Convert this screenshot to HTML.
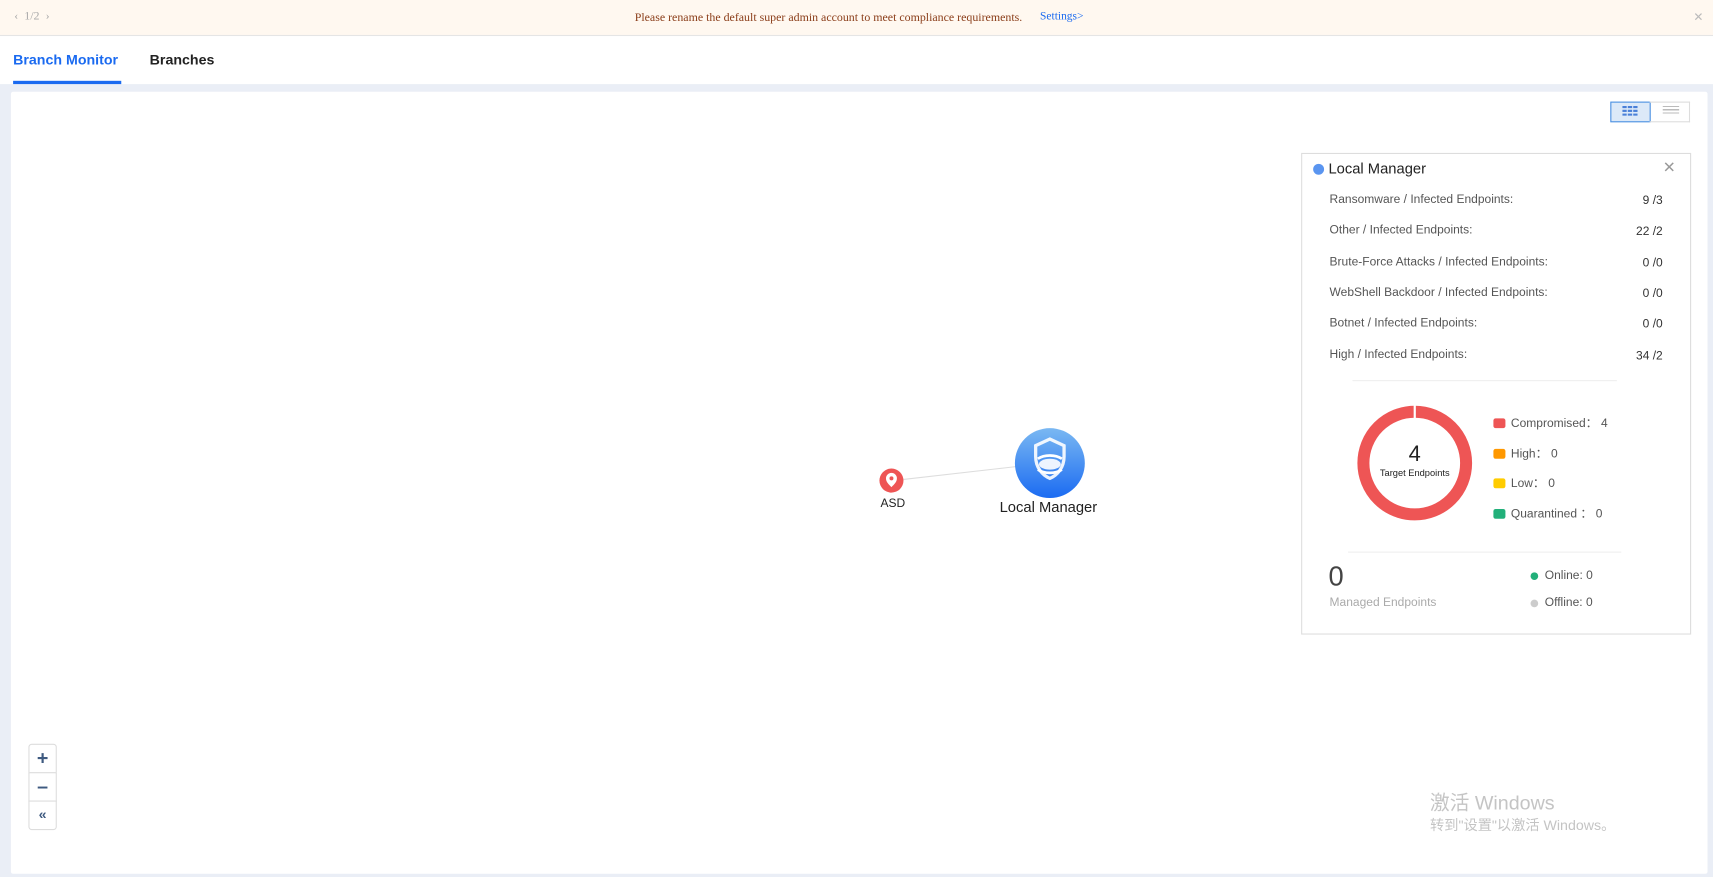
<!DOCTYPE html>
<html><head><meta charset="utf-8"><style>
html,body{margin:0;padding:0;width:1713px;height:877px;overflow:hidden;background:#eaeef6;font-family:"Liberation Sans","Noto Sans CJK SC",sans-serif}
#w{position:absolute;left:0;top:0;width:1568px;height:803px;transform:scale(1.09247,1.0922);transform-origin:0 0;background:#eaeef6}
.a{position:absolute;white-space:nowrap}
.lbl{position:absolute;left:1217px;font-size:11px;color:#555}
.val{position:absolute;right:46px;font-size:11px;color:#333;text-align:right}
.lg{position:absolute;left:1367px;font-size:11px;color:#555}
.lg i{display:inline-block;width:11px;height:9px;border-radius:2px;margin-right:5px;vertical-align:-1px}
.zb{position:absolute;left:26px;width:24px;height:25px;border:1px solid #ddd;background:#fff;color:#3e5a80;text-align:center;font-size:18px;line-height:24px;font-weight:bold}
</style></head><body><div id="w">
<div class="a" style="left:0;top:0;width:1568px;height:32px;background:#fff8f0;border-bottom:1px solid #e5e5e5"></div>
<div class="a" style="left:13px;top:9px;font-size:11px;color:#aaa;font-family:'Liberation Serif',serif">‹ &nbsp;1/2 &nbsp;›</div>
<div class="a" style="left:581px;top:10px;font-size:10.9px;color:#8b3e1a;font-family:'Liberation Serif',serif">Please rename the default super admin account to meet compliance requirements.</div>
<div class="a" style="left:952px;top:10px;font-size:10.5px;color:#1a6af0;font-family:'Liberation Serif',serif">Settings&gt;</div>
<div class="a" style="left:1550px;top:9px;font-size:11px;color:#bbb">✕</div>
<div class="a" style="left:0;top:33px;width:1568px;height:44px;background:#fff"></div>
<div class="a" style="left:12px;top:47px;font-size:13px;font-weight:bold;color:#1a6af0">Branch Monitor</div>
<div class="a" style="left:12px;top:74px;width:99px;height:3px;background:#1a6af0"></div>
<div class="a" style="left:137px;top:47px;font-size:13px;font-weight:bold;color:#222">Branches</div>
<div class="a" style="left:10px;top:84px;width:1553px;height:716px;background:#fff;border-radius:2px"></div>
<div class="a" style="left:1474px;top:93px;width:35px;height:17px;background:#dce9f8;border:1px solid #4a90e2"></div>
<svg class="a" style="left:1485px;top:97px" width="14" height="9"><g fill="#4a80d8"><rect x="0" y="0" width="4" height="2"/><rect x="5" y="0" width="4" height="2"/><rect x="10" y="0" width="4" height="2"/><rect x="0" y="3.5" width="4" height="2"/><rect x="5" y="3.5" width="4" height="2"/><rect x="10" y="3.5" width="4" height="2"/><rect x="0" y="7" width="4" height="2"/><rect x="5" y="7" width="4" height="2"/><rect x="10" y="7" width="4" height="2"/></g></svg>
<div class="a" style="left:1510px;top:93px;width:36px;height:17px;border:1px solid #ddd;border-left:none"></div>
<div class="a" style="left:1522px;top:97px;width:15px;height:9px;background:repeating-linear-gradient(#bbb 0 1px,transparent 1px 3px)"></div>
<div class="a" style="left:1191px;top:140px;width:355px;height:439px;border:1px solid #ddd;background:#fff"></div>
<div class="a" style="left:1202px;top:150px;width:10px;height:10px;border-radius:50%;background:#5a95f0"></div>
<div class="a" style="left:1216px;top:147px;font-size:13.5px;color:#222">Local Manager</div>
<div class="a" style="left:1522px;top:145px;font-size:14px;color:#999">✕</div>
<div class="lbl" style="top:177px">Ransomware / Infected Endpoints:</div><div class="val" style="top:178px">9 /3</div>
<div class="lbl" style="top:205px">Other / Infected Endpoints:</div><div class="val" style="top:206px">22 /2</div>
<div class="lbl" style="top:234px">Brute-Force Attacks / Infected Endpoints:</div><div class="val" style="top:235px">0 /0</div>
<div class="lbl" style="top:262px">WebShell Backdoor / Infected Endpoints:</div><div class="val" style="top:263px">0 /0</div>
<div class="lbl" style="top:290px">Botnet / Infected Endpoints:</div><div class="val" style="top:291px">0 /0</div>
<div class="lbl" style="top:319px">High / Infected Endpoints:</div><div class="val" style="top:320px">34 /2</div>
<div class="a" style="left:1238px;top:348px;width:242px;height:1px;background:#eee"></div>
<svg class="a" style="left:1238px;top:367px" width="114" height="114"><circle cx="57" cy="57" r="47" fill="none" stroke="#ee5555" stroke-width="11"/><rect x="56" y="2" width="2" height="14" fill="#fff"/></svg>
<div class="a" style="left:1238px;top:405px;width:114px;text-align:center;font-size:20px;color:#222;line-height:22px">4</div>
<div class="a" style="left:1238px;top:428px;width:114px;text-align:center;font-size:8.5px;color:#222">Target Endpoints</div>
<div class="lg" style="top:379px"><i style="background:#ee5555"></i>Compromised： 4</div>
<div class="lg" style="top:407px"><i style="background:#ff9800"></i>High： 0</div>
<div class="lg" style="top:434px"><i style="background:#ffcc00"></i>Low： 0</div>
<div class="lg" style="top:462px"><i style="background:#22b07a"></i>Quarantined ： 0</div>
<div class="a" style="left:1234px;top:505px;width:250px;height:1px;background:#eee"></div>
<div class="a" style="left:1216px;top:514px;font-size:25px;color:#444">0</div>
<div class="a" style="left:1217px;top:546px;font-size:11px;color:#aaa">Managed Endpoints</div>
<div class="a" style="left:1401px;top:524px;width:7px;height:7px;border-radius:50%;background:#22b07a"></div>
<div class="a" style="left:1414px;top:521px;font-size:11px;color:#555">Online: 0</div>
<div class="a" style="left:1401px;top:549px;width:7px;height:7px;border-radius:50%;background:#ccc"></div>
<div class="a" style="left:1414px;top:546px;font-size:11px;color:#555">Offline: 0</div>
<svg class="a" style="left:800px;top:390px" width="220" height="70"><line x1="27" y1="49" x2="132" y2="37" stroke="#ddd" stroke-width="1"/>
<defs><linearGradient id="g" x1="0" y1="0" x2="0" y2="1"><stop offset="0" stop-color="#7ab8f2"/><stop offset="1" stop-color="#1b6bf2"/></linearGradient></defs>
<circle cx="16" cy="50" r="11" fill="#ee5555"/><path d="M16 56c-3-3-5-5-5-8a5 5 0 0 1 10 0c0 3-2 5-5 8z" fill="#fff"/><circle cx="16" cy="48" r="1.8" fill="#ee5555"/>
<circle cx="161" cy="34" r="32" fill="url(#g)"/>
<path d="M148 18l13-6 13 6v10c0 10-6 17-13 20-7-3-13-10-13-20z" fill="none" stroke="#fff" stroke-width="3" opacity=".9"/>
<ellipse cx="161" cy="35" rx="10" ry="5" fill="#fff" opacity=".9"/><path d="M150 30c6-4 16-4 22 0M150 40c6 4 16 4 22 0" stroke="#fff" stroke-width="2.5" fill="none"/></svg>
<div class="a" style="left:806px;top:455px;font-size:11px;color:#222">ASD</div>
<div class="a" style="left:915px;top:457px;font-size:13.5px;color:#222">Local Manager</div>
<div class="zb" style="top:681px;border-radius:3px 3px 0 0">+</div>
<div class="zb" style="top:707px">–</div>
<div class="zb" style="top:733px;border-radius:0 0 3px 3px;font-size:13px">«</div>
<div class="a" style="left:1309px;top:721px;font-size:18px;color:#c4c4c4">激活 Windows</div>
<div class="a" style="left:1309px;top:745px;font-size:13px;color:#c4c4c4">转到"设置"以激活 Windows。</div>
</div></body></html>
